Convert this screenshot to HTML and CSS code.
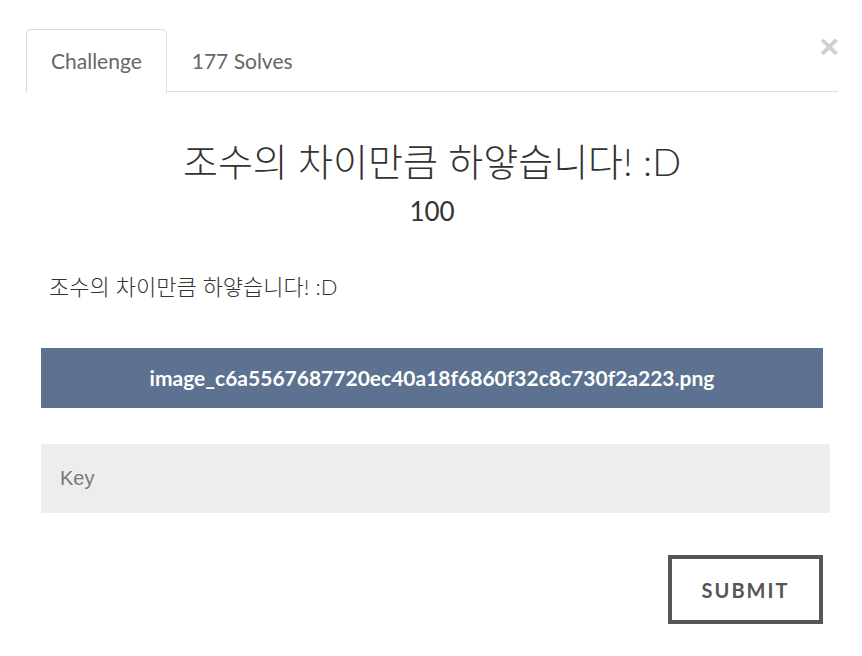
FILE: index.html
```html
<!DOCTYPE html>
<html lang="ko">
<head>
    <meta charset="UTF-8">
    <meta name="viewport" content="width=device-width, initial-scale=1.0">
    <link rel="stylesheet" href="styles.css">
</head>
<body>
    <div class="modal">
        <button class="close" type="button">&times;</button>
        <ul class="tabs">
            <li class="tab active">Challenge</li>
            <li class="tab">177 Solves</li>
        </ul>
        <div class="pane">
            <h2 class="chal-name">조수의 차이만큼 하얗습니다! :D</h2>
            <h3 class="chal-value">100</h3>
            <p class="chal-desc">조수의 차이만큼 하얗습니다! :D</p>
            <a class="file-link" href="#">image_c6a5567687720ec40a18f6860f32c8c730f2a223.png</a>
            <input class="key-input" type="text" placeholder="Key">
            <div class="submit-row">
                <button class="submit" type="button">Submit</button>
            </div>
        </div>
    </div>
</body>
</html>
```

FILE: styles.css
```css
body {
    margin: 0;
    padding: 0;
    background-color: #ffffff;
    font-family: Lato, "Noto Sans CJK KR", sans-serif;
    color: #333333;
}

.modal {
    position: relative;
    width: 812px;
    margin: 29px 0 0 26px;
}

.close {
    position: absolute;
    top: 0;
    right: -1px;
    padding: 0;
    border: none;
    background: none;
    font-family: Arial, "Liberation Sans", sans-serif;
    font-size: 34px;
    font-weight: 700;
    line-height: 1;
    color: #d0d0d0;
    cursor: pointer;
}

.tabs {
    display: flex;
    list-style: none;
    margin: 0;
    padding: 0;
    border-bottom: 1px solid #dddddd;
    height: 62px;
}

.tab {
    padding: 0 24px;
    height: 61px;
    line-height: 61px;
    font-size: 21px;
    color: #666666;
    border: 1px solid transparent;
    border-radius: 5px 5px 0 0;
}

.tab.active {
    border-color: #dddddd;
    border-bottom-color: #ffffff;
    height: 62px;
    background-color: #ffffff;
}

.pane {
    padding: 0 15px;
}

.chal-name {
    margin: 46px 0 0;
    text-align: center;
    font-size: 38px;
    font-weight: 300;
    line-height: 46px;
}

.chal-value {
    margin: 12px 0 0;
    text-align: center;
    font-size: 26px;
    font-weight: 400;
    line-height: 30px;
}

.chal-desc {
    margin: 47px 0 0 8px;
    font-size: 22px;
    font-weight: 300;
    line-height: 28px;
}

.file-link {
    display: block;
    margin-top: 47px;
    width: 782px;
    height: 60px;
    line-height: 60px;
    background-color: #5c7290;
    color: #ffffff;
    text-align: center;
    font-weight: 700;
    font-size: 21px;
    text-decoration: none;
}

.key-input {
    display: block;
    box-sizing: border-box;
    margin-top: 36px;
    width: 789px;
    height: 69px;
    padding: 0 19px;
    border: none;
    background-color: #ededed;
    font-family: Arial, "Liberation Sans", sans-serif;
    font-size: 20px;
    color: #333333;
}

.key-input::placeholder {
    color: #777777;
}

.submit-row {
    display: flex;
    justify-content: flex-end;
    width: 782px;
    margin-top: 42px;
}

.submit {
    box-sizing: border-box;
    width: 155px;
    height: 69px;
    border: 4px solid #555555;
    background-color: #ffffff;
    color: #555555;
    font-family: Lato, sans-serif;
    font-weight: 700;
    font-size: 20px;
    letter-spacing: 2px;
    text-transform: uppercase;
    cursor: pointer;
}
```
